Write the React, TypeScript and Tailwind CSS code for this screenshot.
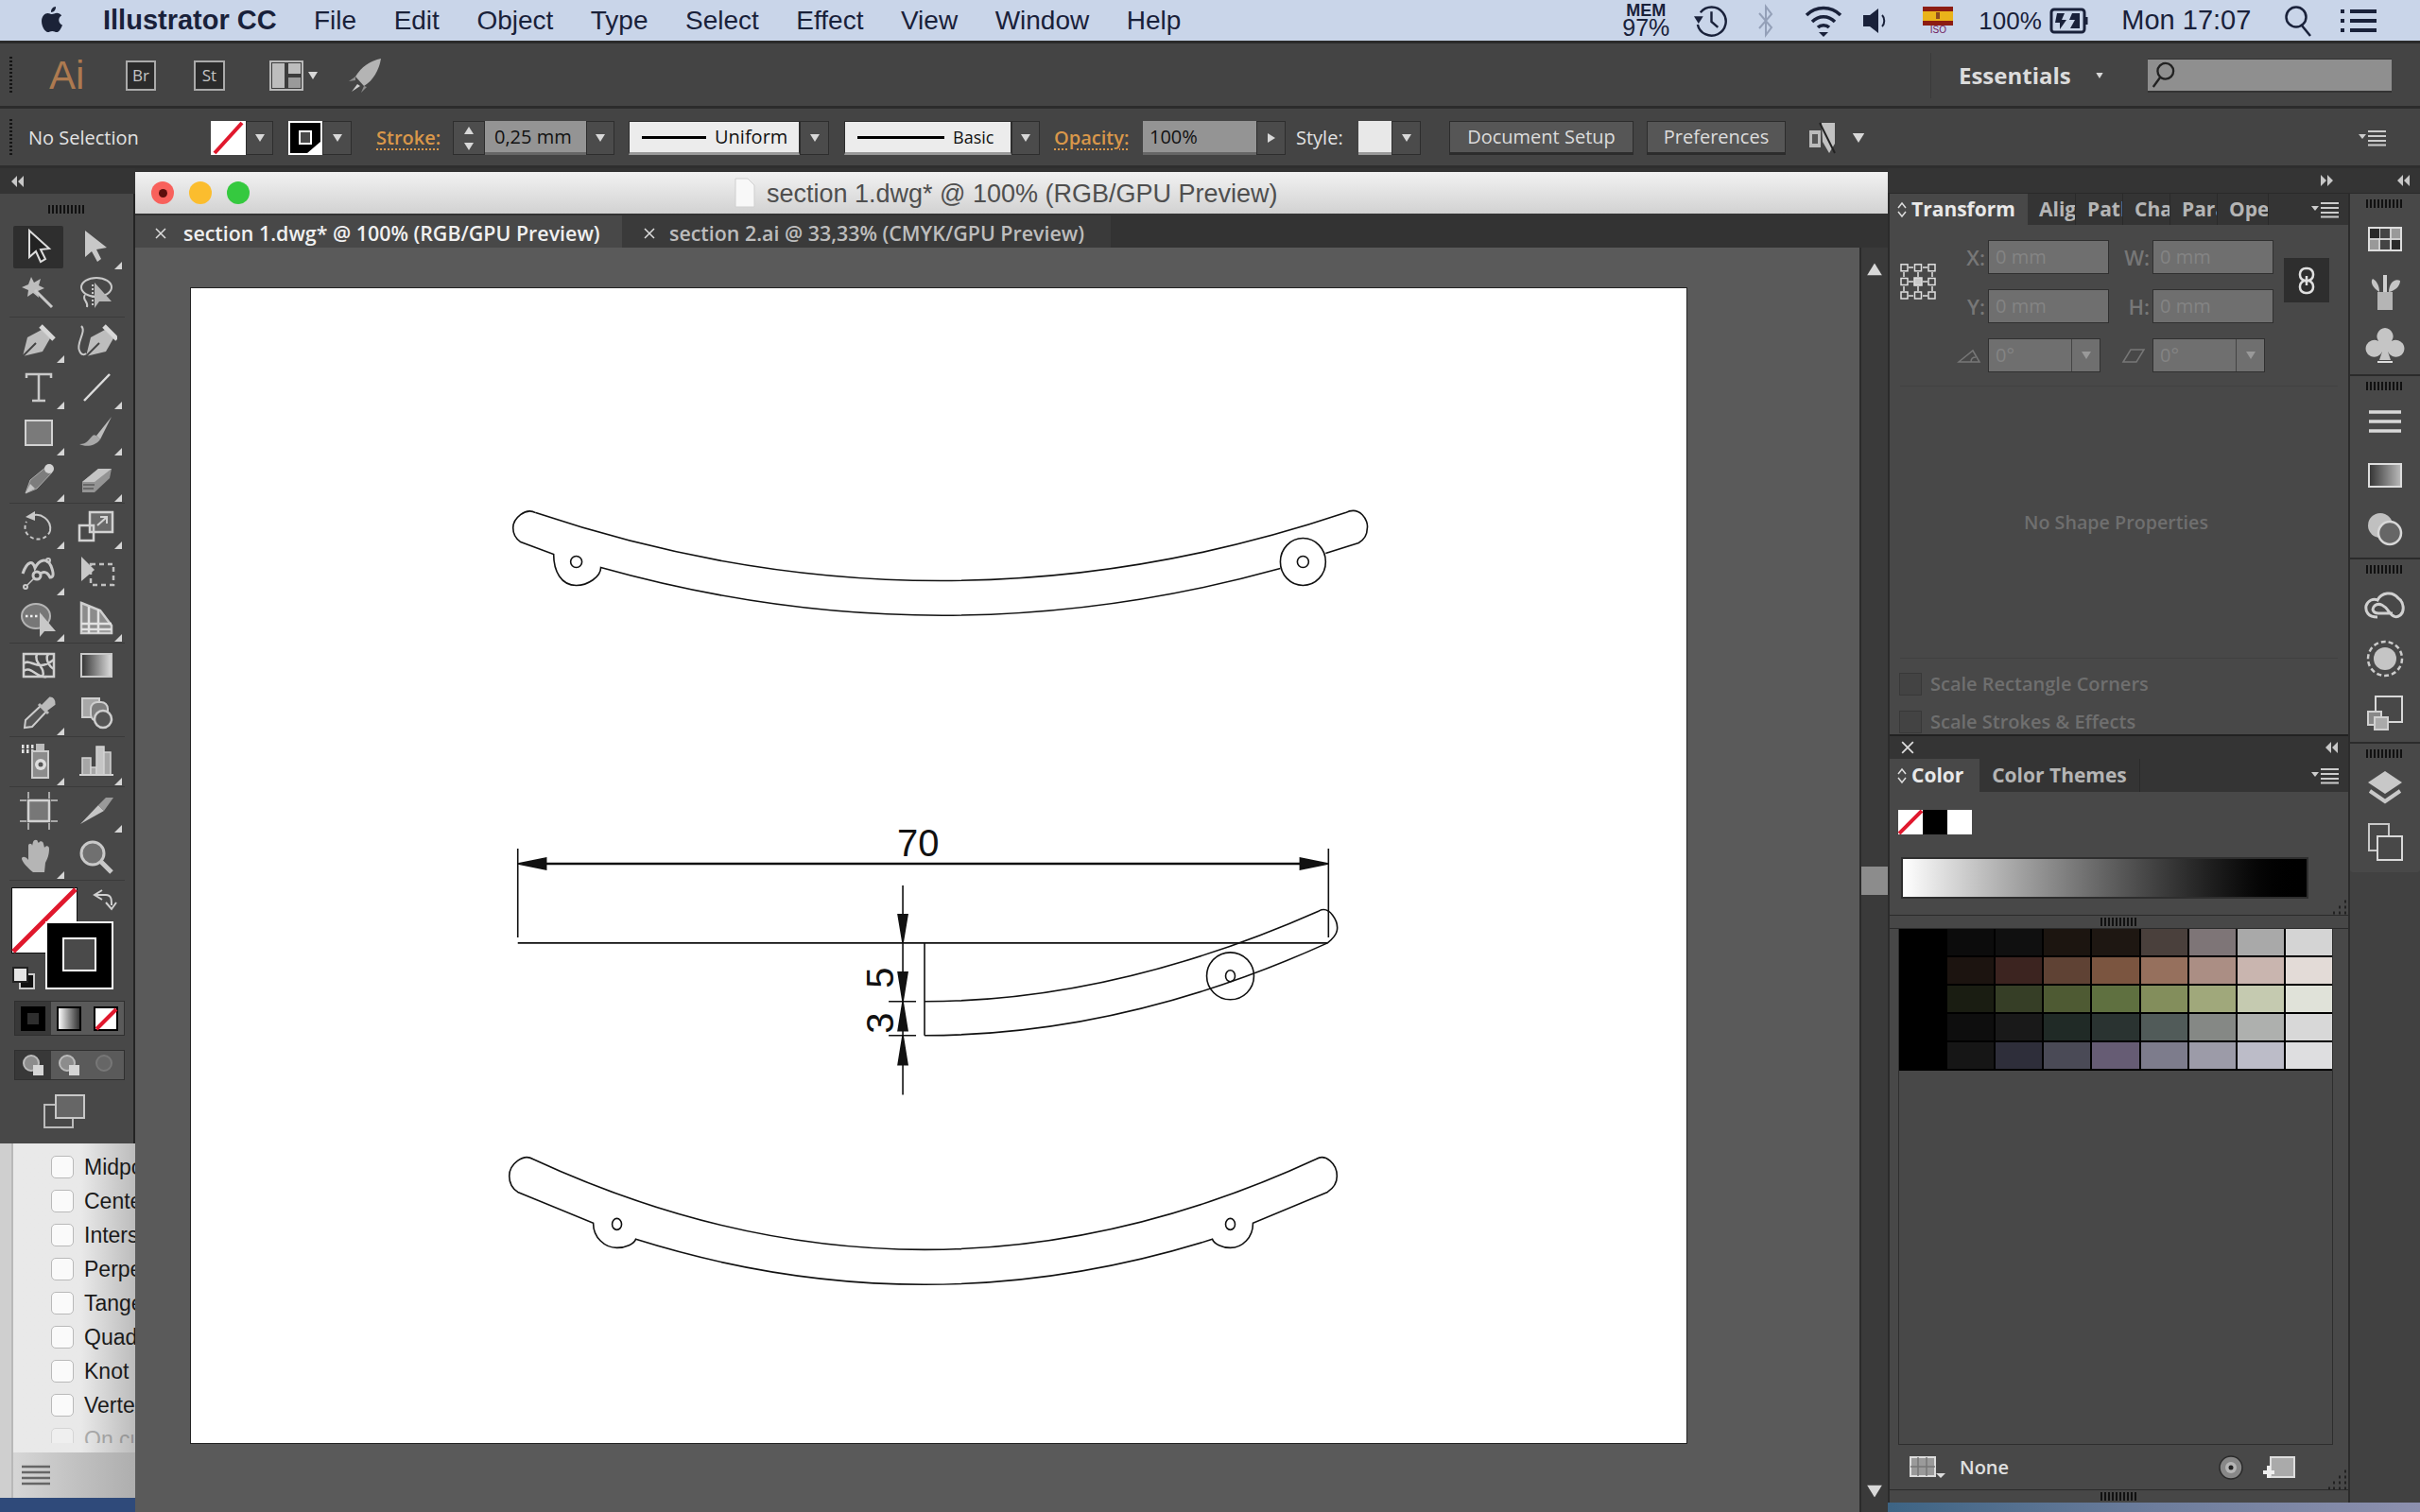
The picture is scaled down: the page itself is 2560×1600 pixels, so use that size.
import { ReactNode } from 'react';

const UI = "font-['Open_Sans',sans-serif]";
const MAC = "font-['Liberation_Sans',Arial,sans-serif]";

const menuItems = ['File', 'Edit', 'Object', 'Type', 'Select', 'Effect', 'View', 'Window', 'Help'];
const snapItems = ['Midpoint', 'Center', 'Intersection', 'Perpendicular', 'Tangent', 'Quadrant', 'Knot', 'Vertex'];

const swatchRows = [
  ['#000000', '#0c0c0c', '#101010', '#1c1510', '#1e1712', '#4a403c', '#7e7577', '#a9a9a9', '#d4d4d4'],
  ['#000000', '#1c1410', '#3c2420', '#5f4234', '#7b5540', '#96705d', '#ab8e84', '#c9b5af', '#e3dbd7'],
  ['#000000', '#1a1d12', '#363e26', '#4e5a33', '#5f7040', '#838e5c', '#a0a87b', '#c5cab0', '#e0e2d9'],
  ['#000000', '#0e0e0e', '#191919', '#202a26', '#2a3331', '#515b59', '#858885', '#aeb0ae', '#d8d8d8'],
  ['#000000', '#161616', '#2e2e3a', '#4a4a56', '#665c74', '#7d7c8c', '#9c9ba8', '#bcbcc8', '#dedee0'],
];

function Grip() {
  return <div className="h-[9px] w-[40px] bg-[repeating-linear-gradient(90deg,#111_0_2px,transparent_2px_4px)]" />;
}

function DotGrip() {
  return <div className="h-[40px] w-[3px] bg-[repeating-linear-gradient(180deg,#151515_0_2px,transparent_2px_4px)]" />;
}

function Tri({ className = '' }: { className?: string }) {
  return (
    <svg viewBox="0 0 10 8" className={`h-[8px] w-[10px] ${className}`}>
      <path d="M0 0H10L5 8Z" fill="#d8d8d8" />
    </svg>
  );
}

function Chevrons({ right }: { right?: boolean }) {
  return (
    <svg viewBox="0 0 14 14" className={`h-[14px] w-[14px] ${right ? 'rotate-180' : ''}`}>
      <path d="M6 1V13L0 7ZM13 1V13L7 7Z" fill="#c8c8c8" />
    </svg>
  );
}

function CloseX({ size = 'h-[12px] w-[12px]', color = '#dddddd' }: { size?: string; color?: string }) {
  return (
    <svg viewBox="0 0 12 12" className={size} fill="none" stroke={color} strokeWidth="1.500">
      <path d="M1 1L11 11M11 1L1 11" />
    </svg>
  );
}

function UpDown() {
  return (
    <svg viewBox="0 0 12 18" className="h-[18px] w-[12px]" fill="none" stroke="#dddddd" strokeWidth="1.500">
      <path d="M2 7L6 2L10 7M2 11L6 16L10 11" />
    </svg>
  );
}

function Drop({ w = 'w-[30px]' }: { w?: string }) {
  return (
    <div className={`flex h-[36px] ${w} items-center justify-center border border-[#2d2d2d] bg-[#4b4b4b]`}>
      <Tri />
    </div>
  );
}

function PanelMenu() {
  return (
    <svg viewBox="0 0 30 18" className="h-[18px] w-[30px]">
      <path d="M0 5H8L4 10Z" fill="#ccc" />
      <path d="M10 2H29M10 7H29M10 12H29M10 16.500H29" stroke="#ccc" strokeWidth="2" />
    </svg>
  );
}

function Corner() {
  return (
    <svg viewBox="0 0 22 22" className="h-[22px] w-[22px]">
      <path d="M18 3h2M12 9h2M18 9h2M6 15h2M12 15h2M18 15h2M1 21h2M6 21h2M12 21h2M18 21h2" stroke="#222" strokeWidth="3" />
    </svg>
  );
}

function AppleLogo() {
  return (
    <svg viewBox="0 0 24 30" className="h-[30px] w-[24px]" fill="#1b2338">
      <path d="M16 1c.3 3-2 6-5 6-.4-3 2-6 5-6Z" />
      <path d="M12 9c1.500 0 3-1.300 5.300-1.300 1.800 0 3.700 1 4.800 2.700-4.200 2.400-3.500 8.200.9 10-.9 2.600-3.300 7.600-6 7.600-1.700 0-2.500-1.100-4.700-1.100s-3 1.100-4.700 1.100C4.500 28 1 21.800 1 16.600 1 11 4.400 7.900 7.500 7.900 9.300 7.900 10.600 9 12 9Z" />
    </svg>
  );
}

function MenuBar() {
  return (
    <div className={`flex h-[43px] items-center bg-[#c9d5e9] text-[28px] leading-none text-[#19213a] ${MAC}`}>
      <div className="ml-[43px] w-[24px] -translate-y-[1px]"><AppleLogo /></div>
      <span className="ml-[42px] w-[185px] whitespace-nowrap text-[29px] font-bold">Illustrator CC</span>
      <div className="ml-[38px] flex gap-[39.500px]">
        {menuItems.map((m) => <span key={m}>{m}</span>)}
      </div>
      <div className="ml-[466px] flex w-[52px] flex-col items-center leading-none">
        <span className="text-[18px] font-bold leading-[15px]">MEM</span>
        <span className="text-[25px] leading-[21px]">97%</span>
      </div>
      <svg viewBox="0 0 38 38" className="ml-[24px] h-[38px] w-[37px]" fill="none" stroke="#19213a" strokeWidth="2.500">
        <path d="M8 10a15.500 15.500 0 1 1-3 13" />
        <path d="M20 9V20L27 26" />
        <path d="M1 14H11L6 22Z" fill="#19213a" stroke="none" />
      </svg>
      <svg viewBox="0 0 20 36" className="ml-[30px] h-[36px] w-[20px]" fill="none" stroke="#94a0b8" strokeWidth="2">
        <path d="M3 10L16 25L10 33V3L16 11L3 26" />
      </svg>
      <svg viewBox="0 0 42 36" className="ml-[30px] h-[36px] w-[42px]" fill="none" stroke="#19213a" strokeWidth="3.500">
        <path d="M3 12C13 2 29 2 39 12M9 19C16 12 26 12 33 19M15 25C18 22 24 22 27 25" />
        <path d="M16 30H26L21 35Z" fill="#19213a" stroke="none" />
      </svg>
      <svg viewBox="0 0 28 30" className="ml-[20px] h-[30px] w-[28px]" fill="#19213a">
        <path d="M1 9H8L17 2V28L8 21H1Z" />
        <path d="M21 9C24 12 24 18 21 21" fill="none" stroke="#19213a" strokeWidth="2" />
      </svg>
      <div className="ml-[36px] flex w-[32px] flex-col items-center">
        <div className="h-[5px] w-[32px] bg-[#8c1c12]" />
        <div className="flex h-[10px] w-[32px] items-center justify-center bg-[#eab31a]"><div className="h-[7px] w-[4px] bg-[#8c4a20]" /></div>
        <div className="h-[5px] w-[32px] bg-[#8c1c12]" />
        <span className="text-[10px] leading-[10px] text-[#70205e]">ISO</span>
      </div>
      <span className="ml-[27px] w-[65px] whitespace-nowrap text-[26px]">100%</span>
      <svg viewBox="0 0 42 32" className="ml-[10px] h-[32px] w-[42px]" fill="none" stroke="#19213a" strokeWidth="3">
        <rect x="2" y="4" width="35" height="24" rx="3" />
        <path d="M39 12V20" />
        <path d="M8 8H16L13 15H18L11 25V18H6Z" fill="#19213a" stroke="none" />
        <path d="M24 8H32V24H22L27 15H21Z" fill="#19213a" stroke="none" />
      </svg>
      <span className="ml-[34px] w-[138px] whitespace-nowrap text-[29px]">Mon 17:07</span>
      <svg viewBox="0 0 30 34" className="ml-[34px] h-[34px] w-[30px]" fill="none" stroke="#19213a" strokeWidth="2.500">
        <circle cx="13" cy="13" r="10.500" />
        <path d="M19 22L28 33" />
      </svg>
      <svg viewBox="0 0 38 28" className="ml-[30px] h-[28px] w-[38px]" fill="none" stroke="#19213a" strokeWidth="4">
        <path d="M0 4H4M10 4H38M0 14H4M10 14H38M0 24H4M10 24H38" />
      </svg>
    </div>
  );
}

function TopBar() {
  return (
    <div className={`flex h-[72px] items-center border-t-[3px] border-b-[3px] border-t-[#2a2a2a] border-b-[#2c2c2c] bg-[#444444] pt-[1px] ${UI}`}>
      <div className="ml-[10px]"><DotGrip /></div>
      <span className={`ml-[39px] w-[36px] text-[42px] leading-none text-[#ad7a50] ${MAC}`}>Ai</span>
      <div className="ml-[45px] flex h-[32px] w-[32px] items-center justify-center border-2 border-[#aaaaaa] bg-[#2b2b2b] text-[17px] text-[#c5c5c5]">Br</div>
      <div className="ml-[40px] flex h-[32px] w-[33px] items-center justify-center border-2 border-[#aaaaaa] bg-[#2b2b2b] text-[17px] text-[#c5c5c5]">St</div>
      <svg viewBox="0 0 36 32" className="ml-[47px] h-[32px] w-[36px]">
        <rect x="1" y="1" width="34" height="30" fill="#3c3c3c" stroke="#b9b9b9" strokeWidth="2" />
        <rect x="3" y="3" width="13" height="26" fill="#bdbdbd" />
        <rect x="20" y="3" width="13" height="11" fill="#bdbdbd" />
        <rect x="20" y="18" width="13" height="11" fill="#9a9a9a" />
      </svg>
      <Tri className="ml-[5px]" />
      <svg viewBox="0 0 36 38" className="ml-[32px] h-[38px] w-[36px]">
        <path d="M35 1C24 3 14 10 8 20L17 30C27 24 33 13 35 1Z" fill="#b4b4b4" />
        <path d="M8 20L1 25L8 24ZM17 30L14 37L20 31Z" fill="#8e8e8e" />
        <path d="M10 28L4 36L13 30Z" fill="#d0d0d0" />
      </svg>
      <div className="ml-auto h-[48px] w-px bg-[#3a3a3a]" />
      <span className="ml-[29px] w-[124px] whitespace-nowrap text-[24px] font-bold leading-none text-[#dcdcdc]">Essentials</span>
      <Tri className="ml-[20px] scale-75" />
      <div className="ml-[46px] mr-[30px] flex h-[36px] w-[258px] items-center border-b-2 border-b-[#333] border-t border-t-[#333] bg-[#8f8f8f] pl-[3px]">
        <svg viewBox="0 0 28 32" className="h-[30px] w-[26px]" fill="none" stroke="#222" strokeWidth="2.500">
          <circle cx="17" cy="12" r="9" />
          <path d="M11 19L3 30" />
        </svg>
      </div>
    </div>
  );
}

function OptionsBar() {
  const lineBox = 'flex h-[36px] items-center border border-[#2d2d2d] border-b-[3px] border-b-[#999] bg-[#ececec] text-[20px] text-[#111]';
  const btn = 'flex h-[36px] items-center justify-center border border-[#2c2c2c] border-b-[3px] bg-[#565656] text-[20px] text-[#dcdcdc]';
  const orange = 'whitespace-nowrap text-[20px] font-semibold text-[#d9974a] underline decoration-dotted underline-offset-4';
  return (
    <div className={`flex h-[63px] items-center border-b-[3px] border-b-[#2e2e2e] bg-[#444444] pt-[2px] ${UI}`}>
      <div className="ml-[10px]"><DotGrip /></div>
      <span className="ml-[17px] w-[120px] whitespace-nowrap text-[20px] text-[#e2e2e2]">No Selection</span>
      <div className="ml-[73px] flex items-center">
        <svg viewBox="0 0 37 36" className="h-[36px] w-[37px]">
          <rect width="37" height="36" fill="#fff" />
          <path d="M4 34L33 2" stroke="#e0182d" strokeWidth="4" />
        </svg>
        <Drop w="w-[29px]" />
      </div>
      <div className="ml-[16px] flex items-center">
        <svg viewBox="0 0 36 36" className="h-[36px] w-[36px]">
          <rect width="36" height="36" fill="#fff" />
          <path d="M2 2H34V22L20 34H2Z" fill="#000" />
          <rect x="12" y="11" width="12" height="13" fill="#4a4a4a" stroke="#fff" strokeWidth="2" />
        </svg>
        <Drop w="w-[31px]" />
      </div>
      <span className={`ml-[26px] w-[67px] ${orange}`}>Stroke:</span>
      <div className="ml-[14px] flex h-[36px] w-[34px] flex-col items-center justify-around border border-[#2d2d2d] bg-[#4d4d4d]">
        <Tri className="rotate-180" />
        <Tri />
      </div>
      <div className="flex h-[36px] w-[107px] items-center border-b-[3px] border-b-[#666] bg-[#949494] pl-[10px] text-[20px] text-[#111]">0,25 mm</div>
      <Drop />
      <div className={`ml-[15px] w-[181px] ${lineBox}`}>
        <div className="ml-[13px] h-[3px] w-[68px] bg-black" />
        <span className="ml-[9px]">Uniform</span>
      </div>
      <Drop w="w-[31px]" />
      <div className={`ml-[16px] w-[177px] ${lineBox}`}>
        <div className="ml-[13px] h-[3px] w-[92px] bg-black" />
        <span className="ml-[9px] text-[18px]">Basic</span>
      </div>
      <Drop />
      <span className={`ml-[15px] w-[81px] ${orange}`}>Opacity:</span>
      <div className="ml-[13px] flex h-[36px] w-[120px] items-center border-b-[3px] border-b-[#666] bg-[#949494] pl-[7px] text-[20px] text-[#111]">100%</div>
      <div className="flex h-[36px] w-[31px] items-center justify-center border border-[#2d2d2d] bg-[#4b4b4b]"><Tri className="-rotate-90" /></div>
      <span className="ml-[11px] w-[52px] text-[20px] text-[#e2e2e2]">Style:</span>
      <div className="ml-[14px] h-[36px] w-[35px] border-b-[3px] border-b-[#999] bg-[#e8e8e8]" />
      <Drop w="w-[31px]" />
      <div className={`ml-[30px] w-[195px] ${btn}`}>Document Setup</div>
      <div className={`ml-[14px] w-[147px] ${btn}`}>Preferences</div>
      <svg viewBox="0 0 32 36" className="ml-[24px] h-[36px] w-[32px]">
        <rect x="1" y="10" width="12" height="18" fill="#bbb" />
        <rect x="4" y="14" width="6" height="10" fill="#555" />
        <path d="M14 2H28V24L22 34L15 22Z" fill="#c2c2c2" />
        <path d="M12 2L28 34" stroke="#222" strokeWidth="2" />
      </svg>
      <Tri className="ml-[16px] scale-125" />
      <div className="ml-auto mr-[35px] flex items-center"><PanelMenu /></div>
    </div>
  );
}

const ink = '#c9c9c9';

function Flyout() {
  return (
    <svg viewBox="0 0 8 8" className="absolute right-[3px] bottom-[1px] h-[8px] w-[8px]">
      <path d="M8 0V8H0Z" fill="#d5d5d5" />
    </svg>
  );
}

function Tool({ icon, fly, active, h = 'h-[49px]' }: { icon: ReactNode; fly?: boolean; active?: boolean; h?: string }) {
  return (
    <div className={`relative flex ${h} w-[61px] items-center justify-center`}>
      {active && <div className="absolute inset-x-[4px] inset-y-[2px] rounded-[2px] bg-[#2e2e2e]" />}
      <svg viewBox="0 0 44 44" className="relative h-[44px] w-[44px]">{icon}</svg>
      {fly && <Flyout />}
    </div>
  );
}

const nib = (
  <g>
    <path d="M5 38L10 18L25 10L34 19L26 33Z" fill="#bdbdbd" />
    <path d="M5 38L19 24" stroke="#444" strokeWidth="2" />
    <path d="M24 6L38 20" stroke="#d8d8d8" strokeWidth="5" />
  </g>
);

const icons = {
  select: <path d="M12 4V32L19 26L24 37L29 34L24 24L33 23Z" fill="#222" stroke="#ddd" strokeWidth="2" />,
  direct: <path d="M10 4V32L17 26L23 37L27 34L22 24L33 22Z" fill="#c8c8c8" />,
  wand: (
    <g>
      <path d="M14 4L17 10L24 6L22 13L28 16L21 19L22 26L16 21L10 25L11 18L4 15L11 12Z" fill="#bdbdbd" />
      <path d="M18 18L36 36" stroke={ink} strokeWidth="3" />
    </g>
  ),
  lasso: (
    <g fill="none" stroke={ink} strokeWidth="2">
      <ellipse cx="22" cy="15" rx="16" ry="10" />
      <path d="M10 23C6 28 14 30 12 36" />
      <path d="M18 12V36" strokeDasharray="2 2" />
      <path d="M20 10V37L25 30L38 30Z" fill="#b5b5b5" stroke="none" />
    </g>
  ),
  pen: nib,
  curve: (
    <g>
      <g transform="translate(6 0)">{nib}</g>
      <path d="M6 6C12 12 0 24 4 32C6 38 10 36 11 35" fill="none" stroke={ink} strokeWidth="2" />
    </g>
  ),
  type: <path d="M9 12V8H35V12M22 8V36M15 36H29" fill="none" stroke={ink} strokeWidth="2.500" />,
  line: <path d="M9 36L36 8" stroke="#ddd" strokeWidth="2.500" />,
  rect: <rect x="8" y="8" width="28" height="26" fill="#7a7a7a" stroke="#d2d2d2" strokeWidth="2" />,
  brush: (
    <g>
      <path d="M38 4L22 24L26 28Z" fill="#bdbdbd" />
      <path d="M18 24C20 22 24 25 26 28C20 36 10 36 4 33C12 33 14 28 18 24Z" fill="#a8a8a8" />
    </g>
  ),
  pencil: (
    <g>
      <path d="M8 36L13 22L30 8L36 14L20 31Z" fill="#7d7d7d" stroke="#aaa" strokeWidth="1" />
      <path d="M8 36L13 26L18 31Z" fill="#c5c5c5" />
      <circle cx="33" cy="10" r="5" fill="#d2d2d2" />
    </g>
  ),
  eraser: (
    <g>
      <path d="M7 24L24 10H38L36 20L20 35H7Z" fill="#949494" />
      <path d="M7 24L24 10H38L20 24Z" fill="#c5c5c5" />
      <path d="M8 27H20M8 31H19" stroke="#5a5a5a" strokeWidth="1.500" />
    </g>
  ),
  rotate: (
    <g fill="none" stroke={ink} strokeWidth="2">
      <path d="M14 10C24 6 36 14 34 26" />
      <path d="M34 26C30 36 16 38 9 28C7 24 7 20 9 16" strokeDasharray="4 3" />
      <path d="M8 11L18 5V15Z" fill={ink} stroke="none" />
    </g>
  ),
  scale: (
    <g fill="none" stroke="#d2d2d2" strokeWidth="2.500">
      <rect x="15" y="6" width="24" height="21" fill="#6a6a6a" />
      <rect x="4" y="20" width="15" height="16" />
      <path d="M23 20L32 12M26 11H33V18" strokeWidth="2" />
    </g>
  ),
  warp: (
    <g fill="none" stroke={ink} strokeWidth="3">
      <path d="M5 22C10 8 16 8 18 16C22 8 30 4 35 14C38 22 38 26 34 26C30 18 26 20 20 24" />
      <circle cx="20" cy="24" r="4" fill="#444" />
      <circle cx="32" cy="8" r="2" strokeWidth="2" />
      <circle cx="8" cy="36" r="2" strokeWidth="2" />
      <path d="M10 34L18 26" strokeWidth="1.500" />
    </g>
  ),
  free: (
    <g>
      <rect x="16" y="12" width="24" height="22" fill="none" stroke="#c0c0c0" strokeWidth="2.500" strokeDasharray="5 4" />
      <path d="M6 4V30L20 18Z" fill="#c8c8c8" />
    </g>
  ),
  shape: (
    <g>
      <ellipse cx="19" cy="18" rx="15" ry="13" fill="#777" stroke="#b5b5b5" strokeWidth="2" />
      <path d="M8 18H26" stroke="#eee" strokeWidth="2.500" strokeDasharray="2.500 2.500" />
      <path d="M23 14V40L28 34L40 34Z" fill="#c8c8c8" />
    </g>
  ),
  grid: (
    <g fill="none" stroke="#cfcfcf" strokeWidth="2.500">
      <path d="M6 4L26 12L38 28V36H6Z" fill="#8c8c8c" />
      <path d="M6 26H38M6 32H38M14 8V36M24 11V36" stroke="#e2e2e2" />
    </g>
  ),
  mesh: (
    <g fill="none" stroke="#cfcfcf" strokeWidth="2.500">
      <rect x="6" y="8" width="32" height="24" />
      <path d="M6 18C14 12 20 28 38 14M6 26C14 20 20 34 30 32M20 8C16 18 30 22 26 32M32 8C28 14 34 22 38 24" />
    </g>
  ),
  gradient: (
    <g>
      <linearGradient id="toolGrad" x1="0" x2="1"><stop offset="0" stopColor="#333" /><stop offset="1" stopColor="#ddd" /></linearGradient>
      <rect x="6" y="8" width="32" height="24" fill="url(#toolGrad)" stroke="#c9c9c9" strokeWidth="2" />
    </g>
  ),
  dropper: (
    <g>
      <path d="M7 37L8 29L24 14L30 20L15 36Z" fill="#555" stroke="#ccc" strokeWidth="2" />
      <path d="M22 12L32 22M26 14L34 6C38 6 38 10 38 12L30 18Z" stroke="#bbb" strokeWidth="3" fill="#bbb" />
    </g>
  ),
  blend: (
    <g stroke="#cfcfcf" strokeWidth="2">
      <rect x="7" y="6" width="18" height="20" fill="#a8a8a8" />
      <rect x="16" y="10" width="18" height="20" rx="7" fill="#7e7e7e" />
      <circle cx="29" cy="28" r="9" fill="#555" strokeWidth="2.500" />
    </g>
  ),
  spray: (
    <g>
      <path d="M4 6h14M4 11h14" stroke="#e2e2e2" strokeWidth="4" strokeDasharray="2.500 2.500" />
      <rect x="19" y="3" width="9" height="7" fill="#bbb" />
      <rect x="15" y="11" width="17" height="28" fill="#8c8c8c" stroke="#ccc" strokeWidth="2" />
      <circle cx="24" cy="25" r="6" fill="#ddd" />
      <circle cx="24" cy="25" r="2.500" fill="#555" />
    </g>
  ),
  graph: (
    <g fill="#a6a6a6" stroke="#d2d2d2" strokeWidth="1.500">
      <rect x="7" y="18" width="9" height="18" />
      <rect x="16" y="28" width="6" height="8" />
      <rect x="22" y="6" width="8" height="30" fill="#c5c5c5" />
      <rect x="30" y="12" width="7" height="24" />
      <path d="M4 36H40" strokeWidth="2" />
    </g>
  ),
  artboard: (
    <g fill="none" stroke="#a8a8a8" strokeWidth="2">
      <rect x="11" y="11" width="22" height="22" fill="#777" stroke="#d2d2d2" strokeWidth="2.500" />
      <path d="M2 11H9M35 11H42M2 33H9M35 33H42M11 2V9M33 2V9M11 35V42M33 35V42" />
    </g>
  ),
  slice: (
    <g>
      <path d="M5 36L24 16L30 22Z" fill="#c5c5c5" />
      <path d="M24 16L32 8H40L30 22Z" fill="#9a9a9a" />
    </g>
  ),
  hand: (
    <path d="M16 38C11 34 5 28 4 24C4 21 8 21 11 25L11 10C11 7 15 7 15 10L16 6C17 3 21 3 21 6L22 7C23 4 27 5 27 8L28 12C30 9 33 10 33 13C33 20 31 24 29 28L28 38Z" fill="#b5b5b5" />
  ),
  zoom: (
    <g fill="none">
      <circle cx="18" cy="18" r="12" fill="#707070" stroke="#c9c9c9" strokeWidth="3" />
      <path d="M27 27L38 38" stroke="#c9c9c9" strokeWidth="5" />
    </g>
  ),
};

function ToolGroup({ children, border = true }: { children: ReactNode; border?: boolean }) {
  return (
    <div className={`mx-[10px] grid w-[122px] grid-cols-2 ${border ? 'border-b border-b-[#3a3a3a]' : ''}`}>{children}</div>
  );
}

function ToolsPanel() {
  return (
    <div className="flex h-[1005px] w-[143px] flex-col border-r-[2px] border-r-[#232323] bg-[#484848]">
      <div className="flex h-[32px] items-center justify-center"><Grip /></div>
      <ToolGroup>
        <Tool icon={icons.select} active />
        <Tool icon={icons.direct} fly />
        <Tool icon={icons.wand} />
        <Tool icon={icons.lasso} />
      </ToolGroup>
      <ToolGroup>
        <Tool icon={icons.pen} fly />
        <Tool icon={icons.curve} />
        <Tool icon={icons.type} fly />
        <Tool icon={icons.line} fly />
        <Tool icon={icons.rect} fly />
        <Tool icon={icons.brush} fly />
        <Tool icon={icons.pencil} fly />
        <Tool icon={icons.eraser} fly />
      </ToolGroup>
      <ToolGroup>
        <Tool icon={icons.rotate} fly />
        <Tool icon={icons.scale} fly />
        <Tool icon={icons.warp} fly />
        <Tool icon={icons.free} />
        <Tool icon={icons.shape} fly />
        <Tool icon={icons.grid} fly />
      </ToolGroup>
      <ToolGroup>
        <Tool icon={icons.mesh} />
        <Tool icon={icons.gradient} />
        <Tool icon={icons.dropper} fly />
        <Tool icon={icons.blend} />
      </ToolGroup>
      <ToolGroup>
        <Tool icon={icons.spray} fly h="h-[52px]" />
        <Tool icon={icons.graph} fly h="h-[52px]" />
      </ToolGroup>
      <ToolGroup>
        <Tool icon={icons.artboard} />
        <Tool icon={icons.slice} fly />
        <Tool icon={icons.hand} fly />
        <Tool icon={icons.zoom} />
      </ToolGroup>
      <div className="relative h-[127px] shrink-0">
        <svg viewBox="0 0 70 70" className="absolute left-[12px] top-[7px] h-[70px] w-[70px]">
          <rect width="70" height="70" fill="#fff" stroke="#111" strokeWidth="2" />
          <path d="M2 68L68 2" stroke="#e0182d" strokeWidth="5" />
        </svg>
        <svg viewBox="0 0 72 72" className="absolute left-[48px] top-[43px] h-[72px] w-[72px]">
          <rect x="1" y="1" width="70" height="70" fill="#000" stroke="#fff" strokeWidth="2" />
          <rect x="19" y="18" width="34" height="34" fill="#4a4a4a" stroke="#fff" strokeWidth="2" />
        </svg>
        <svg viewBox="0 0 26 26" className="absolute left-[98px] top-[6px] h-[26px] w-[26px]" fill="none" stroke="#d0d0d0" strokeWidth="2">
          <path d="M10 4L2 9L10 14M2 9H14C20 9 20 14 20 20M14 17L20 24L25 17" />
        </svg>
        <svg viewBox="0 0 26 26" className="absolute left-[12px] top-[90px] h-[26px] w-[26px]">
          <rect x="9" y="9" width="15" height="15" fill="#111" stroke="#ccc" strokeWidth="2" />
          <rect x="2" y="2" width="15" height="15" fill="#e6e6e6" stroke="#222" strokeWidth="2" />
        </svg>
      </div>
      <div className="ml-[15px] flex h-[37px] w-[117px] border border-[#2f2f2f] bg-[#5a5a5a]">
        <div className="flex w-[39px] items-center justify-center bg-[#383838]">
          <div className="flex h-[26px] w-[26px] items-center justify-center bg-black"><div className="h-[12px] w-[12px] bg-[#2e2e2e]" /></div>
        </div>
        <div className="flex w-[39px] items-center justify-center">
          <div className="h-[26px] w-[26px] border-2 border-black bg-linear-to-r from-white to-[#333]" />
        </div>
        <div className="flex w-[39px] items-center justify-center">
          <svg viewBox="0 0 26 26" className="h-[26px] w-[26px]">
            <rect x="1" y="1" width="24" height="24" fill="#fff" stroke="#000" strokeWidth="2" />
            <path d="M3 24L24 3" stroke="#e0182d" strokeWidth="4" />
          </svg>
        </div>
      </div>
      <div className="ml-[15px] mt-[15px] flex h-[32px] w-[117px] border border-[#2f2f2f] bg-[#5a5a5a]">
        {['bg-[#383838]', '', ''].map((tone, i) => (
          <div key={i} className={`flex w-[39px] items-center justify-center ${tone}`}>
            <svg viewBox="0 0 24 24" className="h-[24px] w-[24px]">
              <circle cx="10" cy="10" r="8" fill={i === 2 ? '#666' : '#8c8c8c'} stroke={i === 2 ? '#777' : '#bbb'} strokeWidth="2" />
              {i < 2 && <rect x="12" y="12" width="11" height="11" fill="#d5d5d5" />}
            </svg>
          </div>
        ))}
      </div>
      <div className="mt-[15px] flex justify-center pr-[5px]">
        <svg viewBox="0 0 44 36" className="h-[36px] w-[44px]">
          <rect x="1" y="11" width="30" height="24" fill="none" stroke="#bbb" strokeWidth="2" />
          <rect x="13" y="1" width="30" height="24" fill="#666" stroke="#c8c8c8" strokeWidth="2" />
        </svg>
      </div>
    </div>
  );
}

function SnapDialog() {
  return (
    <div className={`flex min-h-0 flex-1 flex-col ${MAC}`}>
      <div className="flex h-[375px] w-[143px] bg-linear-to-r from-[#e9e9e9] from-60% to-[#bcbcbc]">
        <div className="h-full w-[14px] border-r-2 border-r-[#b8b8b8] bg-[#cfcfcf]" />
        <div className="relative min-w-0 flex-1 overflow-hidden">
          <div className="flex flex-col pt-[7px]">
            {snapItems.map((s) => (
              <div key={s} className="flex h-[36px] items-center pl-[40px]">
                <div className="h-[24px] w-[24px] shrink-0 rounded-[5px] border border-[#b9b9b9] bg-[#fafafa]" />
                <span className="ml-[11px] whitespace-nowrap text-[23px] text-[#1a1a1a]">{s}</span>
              </div>
            ))}
            <div className="flex h-[22px] items-start overflow-hidden pl-[40px] pt-[6px] opacity-40">
              <div className="h-[24px] w-[24px] shrink-0 rounded-[5px] border border-[#b9b9b9] bg-[#fafafa]" />
              <span className="ml-[11px] whitespace-nowrap text-[23px] leading-[24px] text-[#555]">On curve</span>
            </div>
          </div>
          <div className="absolute inset-x-0 bottom-0 flex h-[48px] items-center bg-linear-to-r from-[#d6d6d6] to-[#aeaeae] pl-[9px]">
            <svg viewBox="0 0 30 22" className="h-[22px] w-[30px]" fill="none" stroke="#666" strokeWidth="2.500">
              <path d="M0 2H30M0 8H30M0 14H30M0 20H30" />
            </svg>
          </div>
        </div>
      </div>
      <div className="flex-1 bg-[#2f4a7a]" />
    </div>
  );
}

function Drawing() {
  return (
    <svg viewBox="202 304 1584 1224" className="absolute inset-0 h-full w-full" fill="none" stroke="#111" strokeWidth="1.600">
      <path d="M567 542Q996 686 1425 542C1440 534 1450 550 1448 559C1448 567 1444 571 1439 574L1404 585" />
      <path d="M1356 601Q996 701 636 600C636 610 622 619 610 619C594 619 586 604 586 586L551 573C545 569 543 565 543 558C543 548 556 536 567 542" />
      <ellipse cx="1380" cy="594" rx="24" ry="25" />
      <ellipse cx="1380" cy="594" rx="6" ry="6" />
      <ellipse cx="610" cy="594" rx="6" ry="6" />

      <path d="M548 898V992M1407 898V992M548 998H1406M979 998V1096" />
      <path d="M566 914H1390" strokeWidth="2.500" />
      <path d="M548 914L578 908V920ZM1407 914L1377 908V920Z" fill="#111" />
      <path d="M956 937V1159M941 1060H970M941 1096H970" />
      <path d="M956 998L951 968H961ZM956 1060L951 1029H961ZM956 1060L951 1091H961ZM956 1096L951 1127H961Z" fill="#111" />
      <path d="M979 1060Q1180 1060 1397 964C1408 958 1418 975 1416 985C1415 990 1411 994 1406 998Q1190 1096 979 1096" />
      <ellipse cx="1303" cy="1033" rx="25" ry="25" />
      <ellipse cx="1303" cy="1033" rx="5" ry="6" />
      <text x="950" y="906" fontSize="40" fill="#111" stroke="none" className={MAC}>70</text>
      <text transform="translate(946 1046) rotate(-90)" fontSize="40" fill="#111" stroke="none" className={MAC}>5</text>
      <text transform="translate(946 1094) rotate(-90)" fontSize="40" fill="#111" stroke="none" className={MAC}>3</text>

      <path d="M564 1227Q979 1419 1394 1227C1404 1221 1416 1232 1416 1245C1416 1253 1412 1258 1406 1262L1327 1295C1327 1310 1316 1321 1303 1321C1294 1321 1286 1317 1284 1312Q979 1408 673 1312C671 1317 663 1321 653 1321C640 1321 628 1310 628 1295L548 1262C542 1258 539 1253 539 1245C539 1232 554 1221 564 1227Z" />
      <ellipse cx="653" cy="1296" rx="5" ry="6" />
      <ellipse cx="1303" cy="1296" rx="5" ry="6" />
    </svg>
  );
}

function DocWindow() {
  return (
    <div className="flex min-w-0 flex-1 flex-col bg-[#333333] pt-[4px]">
      <div className={`flex h-[44px] items-center bg-linear-to-b from-[#f2f2f2] to-[#d2d2d2] ${MAC}`}>
        <div className="ml-[17px] flex gap-[16px]">
          <div className="flex h-[24px] w-[24px] items-center justify-center rounded-full bg-[#f8615c]"><div className="h-[9px] w-[9px] rounded-full bg-[#5c0f0d]" /></div>
          <div className="h-[24px] w-[24px] rounded-full bg-[#fbbd2e]" />
          <div className="h-[24px] w-[24px] rounded-full bg-[#35c93f]" />
        </div>
        <svg viewBox="0 0 22 32" className="ml-[513px] h-[32px] w-[22px]">
          <path d="M1 1H14L21 8V31H1Z" fill="#f8f8f8" stroke="#cfcfcf" />
        </svg>
        <span className="ml-[12px] whitespace-nowrap pt-[2px] text-[27px] leading-none text-[#4f4f4f]">section 1.dwg* @ 100% (RGB/GPU Preview)</span>
      </div>
      <div className={`mt-[2px] flex h-[34px] items-stretch bg-[#333333] pt-[3px] text-[21.400px] font-semibold leading-none ${UI}`}>
        <div className="-mt-[3px] flex w-[515px] items-center bg-[#484848] pl-[21px] pt-[3px] text-[#f0f0f0]">
          <span className="w-[30px]"><CloseX /></span>
          <span className="whitespace-nowrap">section 1.dwg* @ 100% (RGB/GPU Preview)</span>
        </div>
        <div className="-mt-[3px] flex w-[517px] items-center bg-[#3a3a3a] pl-[23px] pt-[3px] text-[#bdbdbd]">
          <span className="w-[27px]"><CloseX /></span>
          <span className="whitespace-nowrap">section 2.ai @ 33,33% (CMYK/GPU Preview)</span>
        </div>
      </div>
      <div className="flex min-h-0 flex-1 bg-[#5a5a5a]">
        <div className="flex-1 pl-[58px] pt-[42px]">
          <div className="relative h-[1224px] w-[1584px] border border-[#222] bg-white">
            <Drawing />
          </div>
        </div>
        <div className="flex w-[30px] flex-col items-center border-l-2 border-l-[#2a2a2a] bg-[#3a3a3a] pb-[18px] pt-[19px]">
          <Tri className="rotate-180 scale-[1.6]" />
          <div className="mt-[628px] h-[30px] w-full bg-[#8c8c8c]" />
          <Tri className="mt-auto scale-[1.6]" />
        </div>
      </div>
    </div>
  );
}

function Field({ label, value, w = 'w-[128px]', labelW = 'w-[44px]', drop }: { label: ReactNode; value: string; w?: string; labelW?: string; drop?: boolean }) {
  return (
    <div className="flex items-center">
      <span className={`${labelW} pr-[3px] text-right text-[22px] font-semibold text-[#777]`}>{label}</span>
      <div className={`flex h-[36px] ${w} items-center border border-[#303030] bg-[#6f6f6f] pl-[7px] text-[20px] text-[#848484]`}>
        <span className="flex-1">{value}</span>
        {drop && <div className="flex h-full w-[30px] items-center justify-center border-l border-l-[#444]"><Tri className="opacity-40" /></div>}
      </div>
    </div>
  );
}

function AngleLabel({ d }: { d: string }) {
  return (
    <svg viewBox="0 0 30 18" className="ml-auto h-[18px] w-[30px]" fill="none" stroke="#777" strokeWidth="1.500">
      <path d={d} />
    </svg>
  );
}

function TransformPanel() {
  return (
    <div className={`flex h-[572px] shrink-0 flex-col overflow-hidden bg-[#484848] ${UI}`}>
      <div className="flex h-[33px] items-stretch bg-[#343434] text-[21px] font-bold leading-none text-[#b5b5b5]">
        <div className="flex w-[146px] items-center gap-[4px] bg-[#484848] pl-[7px] font-bold text-[#e8e8e8]">
          <UpDown />Transform
        </div>
        {[['Alig', 'w-[51px]'], ['Path', 'w-[50px]'], ['Char', 'w-[50px]'], ['Para', 'w-[50px]'], ['Ope', 'w-[54px]']].map(([t, w]) => (
          <div key={t} className={`flex ${w} items-center overflow-hidden whitespace-nowrap border-r border-r-[#2a2a2a] pl-[12px]`}><span>{t}</span></div>
        ))}
        <div className="ml-auto mr-[9px] flex items-center"><PanelMenu /></div>
      </div>
      <div className="flex pl-[11px] pt-[16px]">
        <svg viewBox="0 0 38 38" className="mt-[25px] h-[38px] w-[38px]" fill="none" stroke="#e0e0e0" strokeWidth="1.500">
          <path d="M9 4H14M24 4H29M9 19H14M24 19H29M9 34H14M24 34H29M4 9V14M19 9V14M34 9V14M4 24V29M19 24V29M34 24V29" />
          <rect x="1" y="0.800" width="7" height="7" /><rect x="15.500" y="0.800" width="7" height="7" /><rect x="30" y="0.800" width="7" height="7" />
          <rect x="1" y="15.500" width="7" height="7" /><rect x="15" y="15" width="8" height="8" fill="#c8c8c8" /><rect x="30" y="15.500" width="7" height="7" />
          <rect x="1" y="30" width="7" height="7" /><rect x="15.500" y="30" width="7" height="7" /><rect x="30" y="30" width="7" height="7" />
        </svg>
        <div className="ml-[11px] flex w-[346px] flex-col gap-[16px]">
          <div className="flex gap-[2px]"><Field label="X:" value="0 mm" /><Field label="W:" value="0 mm" /></div>
          <div className="flex gap-[2px]"><Field label="Y:" value="0 mm" /><Field label="H:" value="0 mm" /></div>
          <div className="flex gap-[2px]">
            <Field label={<AngleLabel d="M2 16H24L17 4ZM15 16C15 13 17 11 20 11" />} value="0°" w="w-[119px]" drop />
            <Field label={<AngleLabel d="M2 16L10 3H24L16 16Z" />} value="0°" w="w-[119px]" labelW="w-[53px]" drop />
          </div>
        </div>
        <div className="ml-[11px] mt-[19px] flex h-[47px] w-[48px] items-center justify-center bg-[#2e2e2e]">
          <svg viewBox="0 0 20 30" className="h-[30px] w-[20px]" fill="none" stroke="#e0e0e0" strokeWidth="2.500">
            <rect x="3" y="2" width="14" height="13" rx="6" />
            <rect x="3" y="15" width="14" height="13" rx="6" />
            <path d="M10 10V20" />
          </svg>
        </div>
      </div>
      <div className="mx-[11px] mt-[14px] h-px bg-[#414141]" />
      <div className="flex h-[287px] items-center justify-center pr-[6px] text-[19.700px] font-semibold text-[#6f6f6f]">No Shape Properties</div>
      <div className="mx-[11px] h-px bg-[#414141]" />
      <div className="mt-[15px] flex flex-col gap-[16px] pl-[10px] text-[20px] font-semibold leading-none text-[#6f6f6f]">
        <div className="flex h-[24px] items-center"><div className="h-[24px] w-[24px] border border-[#383838] bg-[#434343]" /><span className="ml-[9px]">Scale Rectangle Corners</span></div>
        <div className="flex h-[24px] items-center"><div className="h-[24px] w-[24px] border border-[#383838] bg-[#434343]" /><span className="ml-[9px]">Scale Strokes &amp; Effects</span></div>
      </div>
    </div>
  );
}

function ColorPanel() {
  return (
    <div className={`flex min-h-0 flex-1 flex-col bg-[#484848] ${UI}`}>
      <div className="flex h-[26px] items-center justify-between border-t-2 border-t-[#222] bg-[#343434] pl-[12px] pr-[10px]">
        <CloseX size="h-[14px] w-[14px]" />
        <Chevrons />
      </div>
      <div className="flex h-[35px] items-stretch bg-[#343434] text-[21px] font-bold leading-none">
        <div className="flex w-[95px] items-center gap-[4px] bg-[#484848] pl-[7px] font-bold text-[#e8e8e8]"><UpDown />Color</div>
        <div className="flex w-[170px] items-center justify-center border-r border-r-[#2a2a2a] text-[#b5b5b5]">Color Themes</div>
        <div className="ml-auto mr-[9px] flex items-center"><PanelMenu /></div>
      </div>
      <div className="flex flex-col pl-[9px] pt-[19px]">
        <div className="flex h-[26px]">
          <svg viewBox="0 0 26 26" className="h-[26px] w-[26px]">
            <rect width="26" height="26" fill="#fff" />
            <path d="M1 25L25 1" stroke="#e0182d" strokeWidth="4" />
          </svg>
          <div className="h-[26px] w-[26px] bg-black" />
          <div className="h-[26px] w-[26px] bg-white" />
        </div>
        <div className="ml-[3px] mt-[24px] h-[44px] w-[431px] border-2 border-[#2e2e2e] bg-linear-to-r from-white to-black" />
      </div>
      <div className="flex justify-end pr-[0px]"><Corner /></div>
      <div className="-mt-[5px] flex h-[15px] shrink-0 items-center justify-center border-y border-y-[#2a2a2a] bg-[#474747]"><Grip /></div>
      <div className="ml-[9px] flex min-h-0 w-[460px] flex-1 flex-col border border-t-0 border-[#2e2e2e]">
        <div className="grid grid-cols-9 gap-[2px] bg-black pb-[2px]">
          {swatchRows.flat().map((c, i) => (
            <div key={i} className="h-[28px]" style={{ backgroundColor: c }} />
          ))}
        </div>
      </div>
      <div className="flex h-[47px] shrink-0 items-center pl-[21px]">
        <svg viewBox="0 0 42 24" className="h-[24px] w-[42px]">
          <rect x="1" y="1" width="26" height="20" fill="#9a9a9a" stroke="#ddd" strokeWidth="2" />
          <path d="M9 1V21M18 1V21M1 11H27" stroke="#777" strokeWidth="1.500" />
          <path d="M28 18H38L33 23Z" fill="#ddd" />
        </svg>
        <span className="ml-[11px] text-[20px] font-semibold leading-none text-[#e0e0e0]">None</span>
        <svg viewBox="0 0 26 26" className="ml-[222px] h-[26px] w-[26px]">
          <circle cx="13" cy="13" r="12" fill="#888" stroke="#2a2a2a" strokeWidth="1.500" />
          <circle cx="13" cy="13" r="6" fill="#b5b5b5" />
          <circle cx="13" cy="13" r="2.500" fill="#222" />
        </svg>
        <svg viewBox="0 0 34 24" className="ml-[21px] h-[24px] w-[34px]">
          <rect x="8" y="1" width="25" height="21" fill="#aaa" stroke="#ddd" strokeWidth="2" />
          <path d="M6 10V23M0 17H12" stroke="#eee" strokeWidth="4" />
        </svg>
        <div className="ml-auto self-end"><Corner /></div>
      </div>
      <div className="flex h-[14px] shrink-0 items-center justify-center border-t border-t-[#2a2a2a] bg-[#474747]"><Grip /></div>
    </div>
  );
}

function DockGroup({ h, children }: { h: string; children: ReactNode }) {
  return (
    <div className={`flex ${h} flex-col items-center border-b-2 border-b-[#2b2b2b]`}>
      <div className="flex h-[20px] items-center"><Grip /></div>
      {children}
    </div>
  );
}

function DockIcon({ mt, children }: { mt: string; children: ReactNode }) {
  return <svg viewBox="0 0 44 40" className={`${mt} h-[40px] w-[44px]`}>{children}</svg>;
}

function IconDock() {
  return (
    <div className="flex w-[76px] flex-col border-l-2 border-l-[#2b2b2b] bg-[#414141]">
      <div className="flex flex-col rounded-b-[3px] bg-[#484848]">
        <DockGroup h="h-[193px]">
          <DockIcon mt="mt-[8px]">
            <rect x="5" y="8" width="34" height="24" fill="#999" stroke="#ddd" strokeWidth="2" />
            <path d="M5 20H39M16 8V32M28 8V32" stroke="#ddd" strokeWidth="1.500" />
            <rect x="6" y="9" width="10" height="10" fill="#2a2a2a" /><rect x="17" y="9" width="10" height="10" fill="#444" /><rect x="17" y="21" width="10" height="10" fill="#444" /><rect x="29" y="21" width="9" height="10" fill="#2a2a2a" />
          </DockIcon>
          <DockIcon mt="mt-[16px]">
            <rect x="14" y="20" width="16" height="19" fill="#b5b5b5" />
            <path d="M9 6C6 9 9 16 16 20C16 13 13 8 9 6Z" fill="#c5c5c5" />
            <path d="M22 2V20" stroke="#d0d0d0" strokeWidth="4" />
            <path d="M26 20C26 11 32 5 38 8C38 14 32 19 26 20Z" fill="#c5c5c5" />
          </DockIcon>
          <DockIcon mt="mt-[16px]">
            <path d="M22 2A9 9 0 0 1 29 16A9 9 0 1 1 25 27L28 36H16L19 27A9 9 0 1 1 15 16A9 9 0 0 1 22 2Z" fill="#c5c5c5" />
            <path d="M14 38H30" stroke="#ddd" strokeWidth="2" />
          </DockIcon>
        </DockGroup>
        <DockGroup h="h-[194px]">
          <DockIcon mt="mt-[10px]">
            <path d="M5 8H39M5 18H39M5 28H39" stroke="#d8d8d8" strokeWidth="3.500" />
          </DockIcon>
          <DockIcon mt="mt-[15px]">
            <linearGradient id="dockGrad" x1="0" x2="1"><stop offset="0" stopColor="#333" /><stop offset="1" stopColor="#bbb" /></linearGradient>
            <rect x="5" y="8" width="34" height="24" fill="url(#dockGrad)" stroke="#ddd" strokeWidth="2" />
          </DockIcon>
          <DockIcon mt="mt-[18px]">
            <circle cx="17" cy="15" r="13" fill="#c0c0c0" />
            <circle cx="27" cy="23" r="12" fill="#666" stroke="#d8d8d8" strokeWidth="2.500" />
          </DockIcon>
        </DockGroup>
        <DockGroup h="h-[195px]">
          <DockIcon mt="mt-[9px]">
            <path d="M14 32C4 32 1 26 2 20C4 14 10 12 14 14C18 6 30 4 36 12C42 16 43 26 38 30C34 33 30 32 26 26C22 20 16 16 11 20C7 24 10 28 15 28H30" fill="none" stroke="#d0d0d0" strokeWidth="3" />
          </DockIcon>
          <DockIcon mt="mt-[16px]">
            <circle cx="22" cy="20" r="18" fill="none" stroke="#ccc" strokeWidth="2.500" strokeDasharray="5 3" />
            <circle cx="22" cy="20" r="12" fill="#c5c5c5" />
          </DockIcon>
          <DockIcon mt="mt-[17px]">
            <rect x="12" y="3" width="28" height="27" fill="none" stroke="#d8d8d8" strokeWidth="2" />
            <rect x="4" y="19" width="14" height="14" fill="#888" stroke="#d0d0d0" strokeWidth="2" />
            <rect x="11" y="25" width="14" height="13" fill="#aaa" stroke="#d0d0d0" strokeWidth="2" />
          </DockIcon>
        </DockGroup>
        <div className="flex h-[136px] flex-col items-center">
          <div className="flex h-[20px] items-center"><Grip /></div>
          <DockIcon mt="mt-[7px]">
            <path d="M22 2L40 14L22 26L4 14Z" fill="#c8c8c8" />
            <path d="M6 23L22 34L38 23" fill="none" stroke="#c8c8c8" strokeWidth="4" />
          </DockIcon>
          <DockIcon mt="mt-[17px]">
            <rect x="5" y="1" width="21" height="28" fill="none" stroke="#c8c8c8" strokeWidth="2" />
            <rect x="14" y="14" width="26" height="25" fill="#484848" stroke="#d8d8d8" strokeWidth="2" />
          </DockIcon>
        </div>
      </div>
      <div className="flex-1" />
    </div>
  );
}

function RightPanels() {
  return (
    <div className="flex w-[563px] shrink-0 flex-col bg-[#343434]">
      <div className="flex h-[27px] items-center justify-end border-b border-b-[#2a2a2a] pr-[10px]">
        <Chevrons right />
        <div className="ml-[68px]"><Chevrons /></div>
      </div>
      <div className="flex min-h-0 flex-1">
        <div className="flex w-[487px] flex-col border-l-2 border-l-[#2b2b2b]">
          <TransformPanel />
          <ColorPanel />
        </div>
        <IconDock />
      </div>
      <div className="h-[10px] shrink-0 bg-linear-to-r from-[#3d6484] via-[#6d7d9c] to-[#8d90ae]" />
    </div>
  );
}

export default function App() {
  return (
    <div className="flex h-[1600px] w-[2560px] flex-col overflow-hidden bg-[#333333]">
      <MenuBar />
      <TopBar />
      <OptionsBar />
      <div className="flex min-h-0 flex-1">
        <div className="flex w-[143px] shrink-0 flex-col">
          <div className="flex h-[27px] items-center bg-[#343434] pl-[12px]"><Chevrons /></div>
          <ToolsPanel />
          <SnapDialog />
        </div>
        <DocWindow />
        <RightPanels />
      </div>
    </div>
  );
}
